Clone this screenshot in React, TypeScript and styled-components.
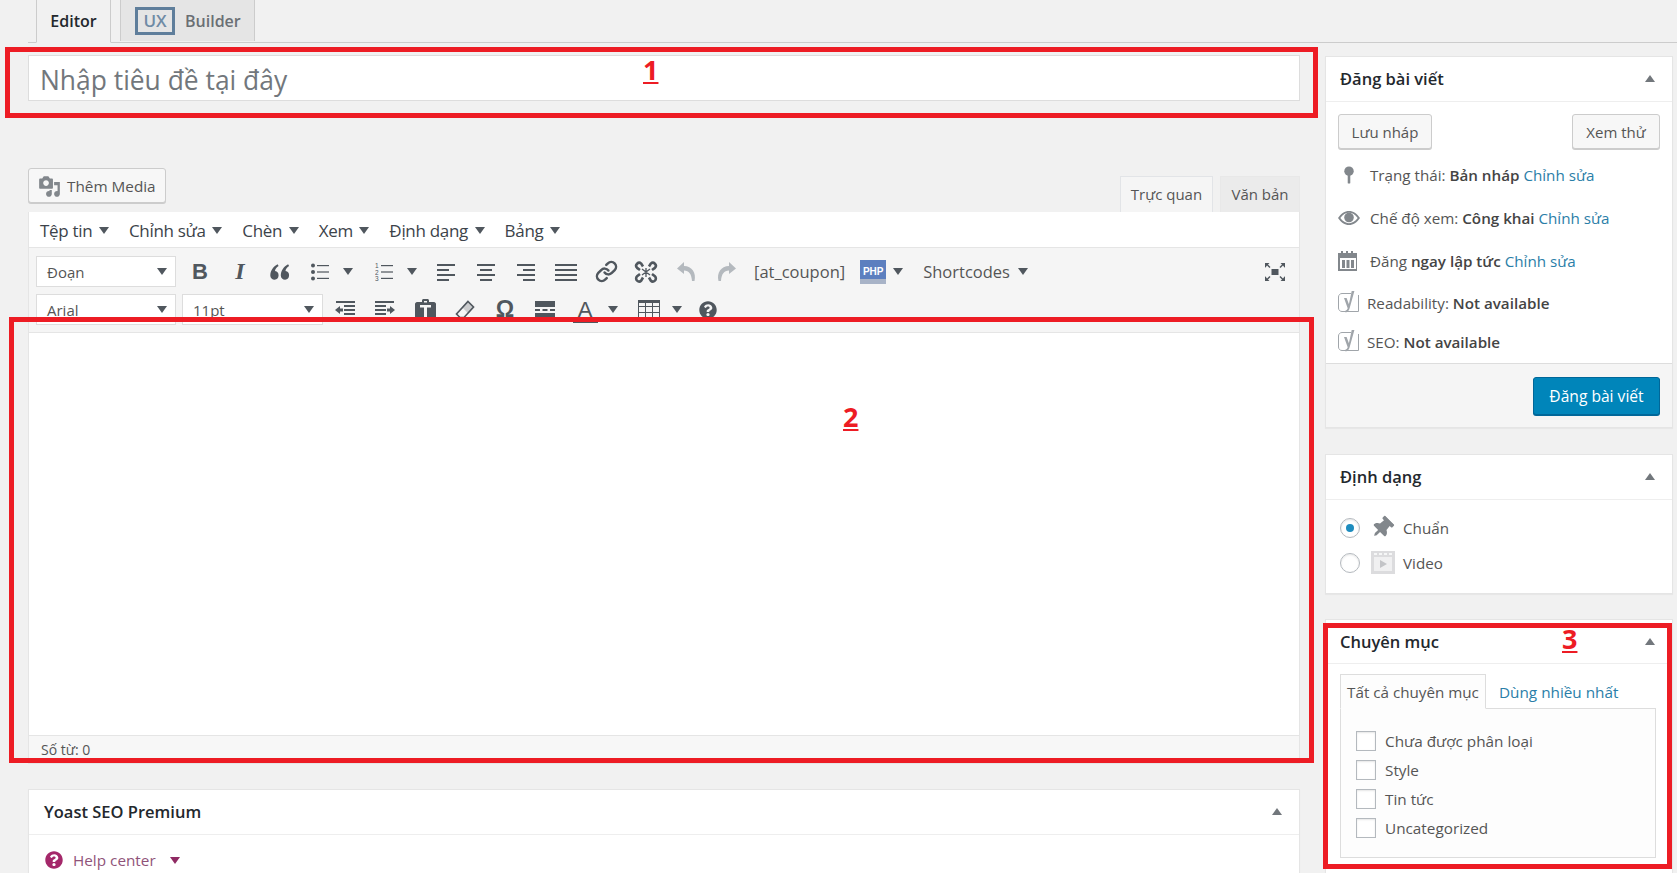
import React from "react";
import styled, { createGlobalStyle } from "styled-components";
import { FaThumbtack, FaQuestionCircle } from "react-icons/fa";
import { Link as LinkIcon } from "lucide-react";

const Font = `"Open Sans", "Noto Sans", "Liberation Sans", sans-serif`;
const Ink = "#50575e";

const Global = createGlobalStyle`
  html, body { margin: 0; padding: 0; background: #f1f1f1; }
  * { box-sizing: border-box; }
`;

const Page = styled.div`
  position: relative;
  width: 1677px;
  height: 873px;
  overflow: hidden;
  background: #f1f1f1;
  font-family: ${Font};
  color: #444;
  font-size: 15px;
`;

const TabBar = styled.div`
  height: 43px;
  margin-left: 28px;
  padding-left: 8px;
  display: flex;
  align-items: flex-end;
  gap: 9px;
  border-bottom: 1px solid #ccc;
`;
const EditorTab = styled.div`
  width: 75px;
  height: 43px;
  margin-bottom: -1px;
  display: flex;
  align-items: center;
  justify-content: center;
  background: #f1f1f1;
  border: 1px solid #ccc;
  border-width: 0 1px;
  border-bottom: 1px solid #f1f1f1;
  font-size: 16px;
  font-weight: 600;
  color: #23282d;
`;
const BuilderTab = styled.div`
  width: 135px;
  height: 41px;
  margin-bottom: 1px;
  padding-left: 14px;
  display: flex;
  align-items: center;
  gap: 10px;
  background: #e5e5e5;
  border: 1px solid #ccc;
  border-width: 0 1px;
  font-size: 16px;
  font-weight: 600;
  color: #6a6f74;
`;
const UxMark = styled.span`
  width: 40px;
  height: 28px;
  display: flex;
  align-items: center;
  justify-content: center;
  border: 3px solid #5f7e9b;
  color: #6f8ba5;
  font-size: 17px;
`;

const Columns = styled.div`
  display: flex;
  padding-left: 28px;
`;
const Main = styled.div`
  width: 1272px;
  padding-top: 12px;
  flex: none;
`;
const Side = styled.div`
  width: 348px;
  margin-left: 25px;
  padding-top: 13px;
  flex: none;
`;

const TitleInput = styled.div`
  height: 46px;
  padding: 4px 0 0 11px;
  display: flex;
  align-items: center;
  background: #fff;
  border: 1px solid #ddd;
  font-size: 26.4px;
  color: #72777c;
`;

const EditorHead = styled.div`
  height: 44px;
  margin-top: 67px;
  display: flex;
  justify-content: space-between;
`;
const MediaButton = styled.div`
  width: 138px;
  height: 35px;
  padding: 1px 0 0 9px;
  display: flex;
  align-items: center;
  gap: 6px;
  background: #f7f7f7;
  border: 1px solid #ccc;
  border-radius: 3px;
  box-shadow: 0 1px 0 #ccc;
  font-size: 15.3px;
  color: #555;
  svg { width: 23px; height: 23px; fill: #82878c; }
`;
const ModeTabs = styled.div`
  display: flex;
  align-items: flex-end;
  gap: 7px;
`;
const ModeTab = styled.div<{ $active?: boolean; $w: number }>`
  width: ${(p) => p.$w}px;
  height: 36px;
  padding-bottom: 1px;
  display: flex;
  align-items: center;
  justify-content: center;
  background: ${(p) => (p.$active ? "#f5f5f5" : "#ebebeb")};
  border: 1px solid ${(p) => (p.$active ? "#e2e4e7" : "#e8e8e8")};
  border-bottom: 0;
  font-size: 15px;
  color: #555;
`;

const MenuBar = styled.div`
  height: 36px;
  padding: 1px 0 0 11px;
  display: flex;
  align-items: center;
  gap: 20px;
  background: #fff;
  border: 1px solid #e5e5e5;
  border-width: 0 1px 1px;
  font-size: 17px;
  letter-spacing: -0.3px;
  color: #3c434a;
`;
const MenuItem = styled.div`
  display: flex;
  align-items: center;
  gap: 6.5px;
`;
const Tri = styled.span<{ $c?: string }>`
  display: inline-block;
  width: 0;
  height: 0;
  border-left: 5px solid transparent;
  border-right: 5px solid transparent;
  border-top: 7px solid ${(p) => p.$c || Ink};
  flex: none;
`;
const Toolbar = styled.div`
  height: 85px;
  padding: 8px 4px 8px 7px;
  display: flex;
  flex-direction: column;
  gap: 7px;
  background: #f5f5f5;
  border: 1px solid #e5e5e5;
  border-width: 0 1px 1px;
`;
const ToolRow = styled.div`
  height: 31px;
  display: flex;
  align-items: center;
`;
const SelectBox = styled.div<{ $w: number; $mr: number }>`
  width: ${(p) => p.$w}px;
  height: 31px;
  margin-right: ${(p) => p.$mr}px;
  padding: 0 8px 0 10px;
  display: flex;
  align-items: center;
  justify-content: space-between;
  background: #fff;
  border: 1px solid #ddd;
  font-size: 15px;
  color: #555;
  flex: none;
`;
const Tool = styled.div`
  width: 40px;
  height: 31px;
  display: flex;
  align-items: center;
  justify-content: center;
  color: ${Ink};
  flex: none;
  svg { display: block; }
`;
const Caret = styled.div<{ $w: number }>`
  width: ${(p) => p.$w}px;
  height: 31px;
  padding-left: 3px;
  display: flex;
  align-items: center;
  flex: none;
`;
const BoldGlyph = styled.span`
  font: bold 22px "Liberation Sans", sans-serif;
`;
const ItalicGlyph = styled.span`
  font: italic bold 24px "Liberation Serif", serif;
`;
const OmegaGlyph = styled.span`
  font: bold 23px "Liberation Sans", sans-serif;
`;
const ColorGlyph = styled.span`
  width: 25px;
  font: 22px/25px "Liberation Sans", sans-serif;
  text-align: center;
  border-bottom: 1px solid ${Ink};
`;
const ToolText = styled.div<{ $ml: number }>`
  margin-left: ${(p) => p.$ml}px;
  display: flex;
  align-items: center;
  gap: 8px;
  font-size: 16.5px;
  color: #555;
  flex: none;
`;
const PhpBadge = styled.span`
  width: 26px;
  height: 24px;
  margin: 0 4px 0 15px;
  display: flex;
  align-items: center;
  justify-content: center;
  background: linear-gradient(#5c7fbf 0 80%, #a8b3c7 80%);
  color: #fff;
  font: bold 10px "Liberation Sans", sans-serif;
  flex: none;
`;
const FullTool = styled(Tool)`
  margin-left: auto;
`;

const EditArea = styled.div`
  height: 402px;
  background: #fff;
  border: 1px solid #e5e5e5;
  border-width: 0 1px;
`;
const StatusBar = styled.div`
  height: 29px;
  margin-bottom: 25px;
  padding-left: 12px;
  display: flex;
  align-items: center;
  background: #f7f7f7;
  border: 1px solid #e5e5e5;
  font-size: 14px;
  color: #555;
`;

const Panel = styled.div<{ $mb?: number }>`
  margin-bottom: ${(p) => p.$mb ?? 0}px;
  background: #fff;
  border: 1px solid #e5e5e5;
  box-shadow: 0 1px 1px rgba(0, 0, 0, 0.04);
`;
const PanelHead = styled.div<{ $h?: number; $pb?: number; $pl?: number }>`
  height: ${(p) => p.$h ?? 45}px;
  padding: 0 14px ${(p) => p.$pb ?? 2}px ${(p) => p.$pl ?? 14}px;
  display: flex;
  align-items: center;
  justify-content: space-between;
  border-bottom: 1px solid #eee;
  font-size: 16.5px;
  font-weight: 600;
  color: #23282d;
`;
const UpTri = styled.span`
  width: 0;
  height: 0;
  border-left: 5.5px solid transparent;
  border-right: 5.5px solid transparent;
  border-bottom: 7px solid #72777c;
  margin-right: 3px;
`;
const HelpRow = styled.div`
  height: 50px;
  padding-left: 16px;
  display: flex;
  align-items: center;
  gap: 10px;
  color: #a4286a;
  font-size: 15.3px;
`;
const HelpLabel = styled.span`
  color: #8f5379;
`;
const HelpCaret = styled.span`
  margin-left: 4px;
  display: flex;
`;

const PublishTop = styled.div`
  padding: 12px 12px 0;
  display: flex;
  justify-content: space-between;
`;
const Btn = styled.div<{ $w: number }>`
  width: ${(p) => p.$w}px;
  height: 35px;
  display: flex;
  align-items: center;
  justify-content: center;
  background: #f7f7f7;
  border: 1px solid #ccc;
  border-radius: 3px;
  box-shadow: 0 1px 0 #ccc;
  font-size: 15px;
  color: #555;
`;
const MetaList = styled.div`
  padding: 4px 0 0 12px;
  height: 214px;
`;
const MetaRow = styled.div<{ $h: number }>`
  height: ${(p) => p.$h}px;
  display: flex;
  align-items: center;
  font-size: 15.2px;
  color: #555;
  b { font-weight: 600; color: #444; }
  a { color: #2a7ea8; text-decoration: none; }
`;
const MetaIcon = styled.span<{ $w: number; $pl?: number }>`
  width: ${(p) => p.$w}px;
  padding-left: ${(p) => p.$pl ?? 0}px;
  display: flex;
  flex: none;
  svg { display: block; }
`;
const MetaText = styled.span`
  white-space: nowrap;
`;
const PublishFoot = styled.div`
  height: 64px;
  padding: 13px 12px 0 0;
  display: flex;
  justify-content: flex-end;
  background: #f5f5f5;
  border-top: 1px solid #ddd;
`;
const PrimaryBtn = styled.div`
  width: 127px;
  height: 38px;
  display: flex;
  align-items: center;
  justify-content: center;
  background: #0085ba;
  border: 1px solid #006799;
  border-radius: 3px;
  box-shadow: 0 1px 0 #006799;
  color: #fff;
  font-size: 15.6px;
`;

const FormatList = styled.div`
  padding: 10px 0 13px 14px;
`;
const FormatRow = styled.div`
  height: 35px;
  display: flex;
  align-items: center;
  font-size: 15.2px;
  color: #555;
`;
const Radio = styled.span<{ $on?: boolean }>`
  width: 20px;
  height: 20px;
  margin-right: 11px;
  display: flex;
  align-items: center;
  justify-content: center;
  background: #fff;
  border: 1px solid #b4b9be;
  border-radius: 50%;
  box-shadow: inset 0 1px 2px rgba(0, 0, 0, 0.1);
  flex: none;
  &::after {
    content: "";
    display: ${(p) => (p.$on ? "block" : "none")};
    width: 8px;
    height: 8px;
    border-radius: 50%;
    background: #1e8cbe;
  }
`;
const FormatIcon = styled.span`
  width: 32px;
  display: flex;
  color: #82878c;
  flex: none;
`;
const PinGlyph = styled(FaThumbtack)`
  transform: rotate(45deg);
`;

const CatBody = styled.div`
  height: 210px;
  padding: 10px 15px 0 14px;
`;
const CatTabs = styled.div`
  display: flex;
  align-items: flex-end;
  margin-bottom: -1px;
  position: relative;
  z-index: 1;
`;
const CatTab = styled.div`
  width: 146px;
  height: 35px;
  display: flex;
  align-items: center;
  justify-content: center;
  background: #fdfdfd;
  border: 1px solid #ddd;
  border-bottom: 1px solid #fdfdfd;
  font-size: 15.2px;
  color: #555;
`;
const CatLink = styled.div`
  height: 34px;
  margin-left: 13px;
  display: flex;
  align-items: center;
  font-size: 15.3px;
  color: #2a7ea8;
`;
const CatBox = styled.div`
  width: 316px;
  height: 150px;
  padding: 17px 0 0 15px;
  background: #fdfdfd;
  border: 1px solid #ddd;
`;
const CatRow = styled.div`
  height: 29px;
  display: flex;
  align-items: center;
  gap: 9px;
  font-size: 15.3px;
  color: #555;
`;
const Check = styled.span`
  width: 20px;
  height: 20px;
  background: #fff;
  border: 1px solid #b4b9be;
  box-shadow: inset 0 1px 2px rgba(0, 0, 0, 0.1);
  flex: none;
`;

const RedBox = styled.div<{ $l: number; $t: number; $w: number; $h: number }>`
  position: absolute;
  left: ${(p) => p.$l}px;
  top: ${(p) => p.$t}px;
  width: ${(p) => p.$w}px;
  height: ${(p) => p.$h}px;
  border: 5px solid #ed1c24;
  pointer-events: none;
`;
const RedNum = styled.div<{ $l: number; $t: number }>`
  position: absolute;
  left: ${(p) => p.$l}px;
  top: ${(p) => p.$t}px;
  font: bold 27px/34px "Open Sans", sans-serif;
  color: #ed1c24;
  text-decoration: underline;
`;

const Bars = ({ rows, w }: { rows: [number, number][]; w: number }) => (
  <svg width={w} height="18" viewBox={`0 0 ${w} 18`} fill="currentColor">
    {rows.map(([x, bw], i) => (
      <rect key={i} x={x} y={1 + i * 5} width={bw} height="2" />
    ))}
  </svg>
);
const Quote = () => (
  <svg width="21" height="16" viewBox="0 0 21 16" fill="currentColor">
    <path d="M4.6 15.7A4.3 4.3 0 0 1 .3 11.4C.3 7 3.2 2.6 7.6.3l1 1.7C6.6 3.4 5.2 5 5 7a4.4 4.4 0 0 1-.4 8.7z" />
    <path d="M15.1 15.7a4.3 4.3 0 0 1-4.3-4.3c0-4.4 2.9-8.8 7.3-11.1l1 1.7c-2 1.4-3.4 3-3.6 5a4.4 4.4 0 0 1-.4 8.7z" />
  </svg>
);
const BulList = () => (
  <svg width="18" height="18" viewBox="0 0 18 18" fill="currentColor">
    <circle cx="2" cy="2.500" r="2" /><circle cx="2" cy="9" r="2" /><circle cx="2" cy="15.500" r="2" />
    <rect x="6" y="2" width="12" height="1.200" /><rect x="6" y="8.400" width="12" height="1.200" /><rect x="6" y="14.800" width="12" height="1.200" />
  </svg>
);
const NumList = () => (
  <svg width="18" height="20" viewBox="0 0 18 20" fill="currentColor">
    <text x="0" y="6" fontSize="6.500" fontFamily="Liberation Sans">1</text>
    <text x="0" y="12.500" fontSize="6.500" fontFamily="Liberation Sans">2</text>
    <text x="0" y="19" fontSize="6.500" fontFamily="Liberation Sans">3</text>
    <rect x="6" y="3" width="12" height="1.200" /><rect x="6" y="9.400" width="12" height="1.200" /><rect x="6" y="15.800" width="12" height="1.200" />
  </svg>
);
const Unlink = () => (
  <svg width="24" height="24" viewBox="0 0 24 24" fill="none" stroke="currentColor" strokeWidth="2.600">
    <path d="M9 6.500 7.200 3.600a3 3 0 0 0-4.100.1 3 3 0 0 0 0 4.200L6 10" />
    <path d="M18 14l2.900 2.200a3 3 0 0 1 0 4.400 3 3 0 0 1-4.200-.1L15 17.500" />
    <path d="M15 6.500l1.800-2.900a3 3 0 0 1 4.100.1 3 3 0 0 1 0 4.200L18 10" />
    <path d="M6 14l-2.900 2.200a3 3 0 0 0 0 4.400 3 3 0 0 0 4.200-.1L9 17.500" />
    <path strokeWidth="1.300" d="M12 12 8 9M12 12l-4 3M12 12l4 3M12 12l4-3M12 12v5M12 12V8" />
  </svg>
);
const Undo = ({ flip }: { flip?: boolean }) => (
  <svg width="21" height="21" viewBox="0 0 21 21" fill="#b4b9be" transform={flip ? "scale(-1 1)" : undefined}>
    <path d="M8 1 1 7.500 8 13V9.500C13 9.500 15.500 13 16 20h2.500C20.500 12 16 5 8 5z" />
  </svg>
);
const Fullscreen = () => (
  <svg width="20" height="20" viewBox="0 0 20 20" fill="currentColor">
    <rect x="6.500" y="7" width="7" height="6" />
    <path d="M0 1h4.500L3 2.500 5.500 5 4.500 6 2 3.500.5 5.500H0zM20 1h-4.500L17 2.500 14.500 5l1 1L18 3.500l1.500 2h.5zM0 19h4.500L3 17.500 5.500 15l-1-1L2 16.500l-1.500-2H0zM20 19h-4.500l1.500-1.500L14.500 15l1-1 2.500 2.500 1.500-2h.5z" />
  </svg>
);
const Outdent = () => (
  <svg width="20" height="18" viewBox="0 0 20 18" fill="currentColor">
    <rect x="1" y="0" width="19" height="2" /><rect x="9" y="4" width="11" height="2" /><rect x="9" y="8" width="11" height="2" /><rect x="9" y="12" width="11" height="2" /><rect x="1" y="16" width="19" height="2" />
    <path d="M0 9l5-4v2.500h3v3H5V13z" />
  </svg>
);
const Indent = () => (
  <svg width="20" height="18" viewBox="0 0 20 18" fill="currentColor">
    <rect x="0" y="0" width="19" height="2" /><rect x="0" y="4" width="11" height="2" /><rect x="0" y="8" width="11" height="2" /><rect x="0" y="12" width="11" height="2" /><rect x="0" y="16" width="19" height="2" />
    <path d="M20 9l-5-4v2.500h-3v3h3V13z" />
  </svg>
);
const Paste = () => (
  <svg width="21" height="22" viewBox="0 0 21 22" fill="currentColor">
    <path fillRule="evenodd" d="M2 3h5V1.500C7 .7 7.700 0 8.500 0h4C13.300 0 14 .7 14 1.500V3h5c1 0 2 1 2 2v15c0 1-1 2-2 2H2c-1 0-2-1-2-2V5c0-1 1-2 2-2zM9 2v1.500h3V2zM5 6v2.500h4V19h3V8.500h4V6z" />
  </svg>
);
const Eraser = () => (
  <svg width="20" height="20" viewBox="0 0 20 20" fill="none" stroke="currentColor" strokeWidth="1.600">
    <path d="M13 1.500 18.500 7 9 17.500H5L1.500 14z" />
    <path fill="currentColor" d="M13 1.500 18.500 7l-5 5.500L8 7z" opacity=".25" />
  </svg>
);
const HrIcon = () => (
  <svg width="20" height="20" viewBox="0 0 20 20" fill="currentColor">
    <rect x="0" y="1" width="20" height="6" />
    <rect x="0" y="9" width="5" height="2" /><rect x="7.500" y="9" width="5" height="2" /><rect x="15" y="9" width="5" height="2" />
    <rect x="0" y="13" width="20" height="6" />
  </svg>
);
const TableIcon = () => (
  <svg width="22" height="19" viewBox="0 0 22 19" fill="none" stroke="currentColor" strokeWidth="1">
    <path d="M.5.5h21v18H.5zM.5 6.500h21M.5 12.500h21M7.500.5v18M14.500.5v18" />
    <rect x=".5" y=".5" width="21" height="2" fill="currentColor" />
  </svg>
);
const PinIcon = () => (
  <svg width="12" height="20" viewBox="0 0 14 20" fill="#82878c">
    <circle cx="7" cy="5.500" r="5.500" />
    <rect x="5.500" y="9" width="3" height="11" rx="1" />
  </svg>
);
const EyeIcon = () => (
  <svg width="22" height="14" viewBox="0 0 22 14" fill="#82878c">
    <path fillRule="evenodd" d="M0 7C3 2.500 6.800 0 11 0s8 2.500 11 7c-3 4.500-6.800 7-11 7S3 11.500 0 7zm2.300 0C4.800 10.300 7.700 12.200 11 12.200S17.200 10.300 19.700 7C17.200 3.700 14.300 1.800 11 1.800S4.800 3.700 2.300 7z" />
    <circle cx="11" cy="6.500" r="4.800" />
  </svg>
);
const CalIcon = () => (
  <svg width="20" height="21" viewBox="0 0 20 21" fill="#82878c">
    <path fillRule="evenodd" d="M0 3h3V1h2v2h3V1h2v2h3V1h2v2h4v18H0zM2 8v11h16V8z" />
    <rect x="4" y="10" width="3" height="8" /><rect x="8.500" y="10" width="3" height="8" /><rect x="13" y="10" width="3" height="8" />
  </svg>
);
const YoastIcon = () => (
  <svg width="22" height="25" viewBox="0 0 22 25" fill="none" stroke="#a0a5aa" strokeWidth="1">
    <path d="M13 3.500H4c-2 0-3.500 1.500-3.500 3.500v11c0 2 1.500 3.500 3.500 3.500h16.500V5" />
    <path fill="#a0a5aa" stroke="none" d="M6 8h2.600l2.300 6.200L13.700 1h2.700l-4.700 17c-.7 2.500-1.800 4-4.200 4.500v-2c1.300-.4 1.800-1 2.200-2.300z" />
  </svg>
);
const VideoIcon = () => (
  <svg width="24" height="23" viewBox="0 0 24 23">
    <rect width="24" height="23" fill="#dcdcde" />
    <rect x="3" y="6" width="18" height="14" fill="#f0f0f1" />
    <path d="M3 2h3v2H3zM8 2h3v2H8zM13 2h3v2h-3zM18 2h3v2h-3z" fill="#f6f7f7" />
    <path d="M9 9l7 4-7 4z" fill="#c3c4c7" />
  </svg>
);
const MediaIcon = () => (
  <svg viewBox="0 0 20 20">
    <path d="M13 11V4c0-.55-.45-1-1-1h-1.670L9 1H5L3.670 3H2c-.55 0-1 .45-1 1v7c0 .55.45 1 1 1h10c.55 0 1-.45 1-1zM7 4.500c1.380 0 2.500 1.120 2.500 2.500S8.380 9.500 7 9.500 4.500 8.380 4.500 7 5.620 4.500 7 4.500zM14 6h5v10.500c0 1.380-1.120 2.500-2.500 2.500S14 17.880 14 16.500s1.120-2.500 2.500-2.500c.17 0 .34.02.5.05V9h-3V6zm-4 8.050V13h2v3.500c0 1.380-1.120 2.500-2.500 2.500S7 17.880 7 16.500 8.120 14 9.500 14c.17 0 .34.02.5.05z" />
  </svg>
);

const menus = ["Tệp tin", "Chỉnh sửa", "Chèn", "Xem", "Định dạng", "Bảng"];
const cats = ["Chưa được phân loại", "Style", "Tin tức", "Uncategorized"];

export default function App() {
  return (
    <Page>
      <Global />
      <TabBar>
        <EditorTab>Editor</EditorTab>
        <BuilderTab>
          <UxMark>UX</UxMark>
          Builder
        </BuilderTab>
      </TabBar>
      <Columns>
        <Main>
          <TitleInput>Nhập tiêu đề tại đây</TitleInput>
          <EditorHead>
            <MediaButton>
              <MediaIcon />
              Thêm Media
            </MediaButton>
            <ModeTabs>
              <ModeTab $active $w={93}>Trực quan</ModeTab>
              <ModeTab $w={80}>Văn bản</ModeTab>
            </ModeTabs>
          </EditorHead>
          <MenuBar>
            {menus.map((m) => (
              <MenuItem key={m}>
                {m}
                <Tri />
              </MenuItem>
            ))}
          </MenuBar>
          <Toolbar>
            <ToolRow>
              <SelectBox $w={140} $mr={4}>Đoạn<Tri /></SelectBox>
              <Tool><BoldGlyph>B</BoldGlyph></Tool>
              <Tool><ItalicGlyph>I</ItalicGlyph></Tool>
              <Tool><Quote /></Tool>
              <Tool><BulList /></Tool>
              <Caret $w={24}><Tri /></Caret>
              <Tool><NumList /></Tool>
              <Caret $w={22}><Tri /></Caret>
              <Tool><Bars w={18} rows={[[0, 18], [0, 12], [0, 18], [0, 12]]} /></Tool>
              <Tool><Bars w={18} rows={[[0, 18], [3, 12], [0, 18], [3, 12]]} /></Tool>
              <Tool><Bars w={18} rows={[[0, 18], [6, 12], [0, 18], [6, 12]]} /></Tool>
              <Tool><Bars w={22} rows={[[0, 22], [0, 22], [0, 22], [0, 22]]} /></Tool>
              <Tool><LinkIcon size={23} strokeWidth={2.6} /></Tool>
              <Tool><Unlink /></Tool>
              <Tool><Undo /></Tool>
              <Tool><Undo flip /></Tool>
              <ToolText $ml={8}>[at_coupon]</ToolText>
              <PhpBadge>PHP</PhpBadge>
              <Caret $w={21}><Tri /></Caret>
              <ToolText $ml={12}>Shortcodes<Tri /></ToolText>
              <FullTool><Fullscreen /></FullTool>
            </ToolRow>
            <ToolRow>
              <SelectBox $w={140} $mr={6}>Arial<Tri /></SelectBox>
              <SelectBox $w={141} $mr={2}>11pt<Tri /></SelectBox>
              <Tool><Outdent /></Tool>
              <Tool><Indent /></Tool>
              <Tool><Paste /></Tool>
              <Tool><Eraser /></Tool>
              <Tool><OmegaGlyph>Ω</OmegaGlyph></Tool>
              <Tool><HrIcon /></Tool>
              <Tool><ColorGlyph>A</ColorGlyph></Tool>
              <Caret $w={24}><Tri /></Caret>
              <Tool><TableIcon /></Tool>
              <Caret $w={19}><Tri /></Caret>
              <Tool><FaQuestionCircle size={18} /></Tool>
            </ToolRow>
          </Toolbar>
          <EditArea />
          <StatusBar>Số từ: 0</StatusBar>
          <Panel>
            <PanelHead $pl={15}>
              Yoast SEO Premium
              <UpTri />
            </PanelHead>
            <HelpRow>
              <FaQuestionCircle size={18} />
              <HelpLabel>Help center</HelpLabel>
              <HelpCaret><Tri $c="#8f2a63" /></HelpCaret>
            </HelpRow>
          </Panel>
        </Main>
        <Side>
          <Panel $mb={26}>
            <PanelHead>
              Đăng bài viết
              <UpTri />
            </PanelHead>
            <PublishTop>
              <Btn $w={94}>Lưu nháp</Btn>
              <Btn $w={88}>Xem thử</Btn>
            </PublishTop>
            <MetaList>
              <MetaRow $h={43}>
                <MetaIcon $w={32} $pl={5}><PinIcon /></MetaIcon>
                <MetaText>Trạng thái: <b>Bản nháp</b> <a>Chỉnh sửa</a></MetaText>
              </MetaRow>
              <MetaRow $h={43}>
                <MetaIcon $w={32}><EyeIcon /></MetaIcon>
                <MetaText>Chế độ xem: <b>Công khai</b> <a>Chỉnh sửa</a></MetaText>
              </MetaRow>
              <MetaRow $h={43}>
                <MetaIcon $w={32}><CalIcon /></MetaIcon>
                <MetaText>Đăng <b>ngay lập tức</b> <a>Chỉnh sửa</a></MetaText>
              </MetaRow>
              <MetaRow $h={41}>
                <MetaIcon $w={29}><YoastIcon /></MetaIcon>
                <MetaText>Readability: <b>Not available</b></MetaText>
              </MetaRow>
              <MetaRow $h={37}>
                <MetaIcon $w={29}><YoastIcon /></MetaIcon>
                <MetaText>SEO: <b>Not available</b></MetaText>
              </MetaRow>
            </MetaList>
            <PublishFoot>
              <PrimaryBtn>Đăng bài viết</PrimaryBtn>
            </PublishFoot>
          </Panel>
          <Panel $mb={25}>
            <PanelHead>
              Định dạng
              <UpTri />
            </PanelHead>
            <FormatList>
              <FormatRow>
                <Radio $on />
                <FormatIcon><PinGlyph size={22} /></FormatIcon>
                Chuẩn
              </FormatRow>
              <FormatRow>
                <Radio />
                <FormatIcon><VideoIcon /></FormatIcon>
                Video
              </FormatRow>
            </FormatList>
          </Panel>
          <Panel>
            <PanelHead $h={44} $pb={0}>
              Chuyên mục
              <UpTri />
            </PanelHead>
            <CatBody>
              <CatTabs>
                <CatTab>Tất cả chuyên mục</CatTab>
                <CatLink>Dùng nhiều nhất</CatLink>
              </CatTabs>
              <CatBox>
                {cats.map((c) => (
                  <CatRow key={c}>
                    <Check />
                    {c}
                  </CatRow>
                ))}
              </CatBox>
            </CatBody>
          </Panel>
        </Side>
      </Columns>

      <RedBox $l={5} $t={47} $w={1313} $h={71} />
      <RedBox $l={9} $t={317} $w={1305} $h={446} />
      <RedBox $l={1323} $t={623} $w={349} $h={246} />
      <RedNum $l={643} $t={53}>1</RedNum>
      <RedNum $l={843} $t={400}>2</RedNum>
      <RedNum $l={1562} $t={622}>3</RedNum>
    </Page>
  );
}
